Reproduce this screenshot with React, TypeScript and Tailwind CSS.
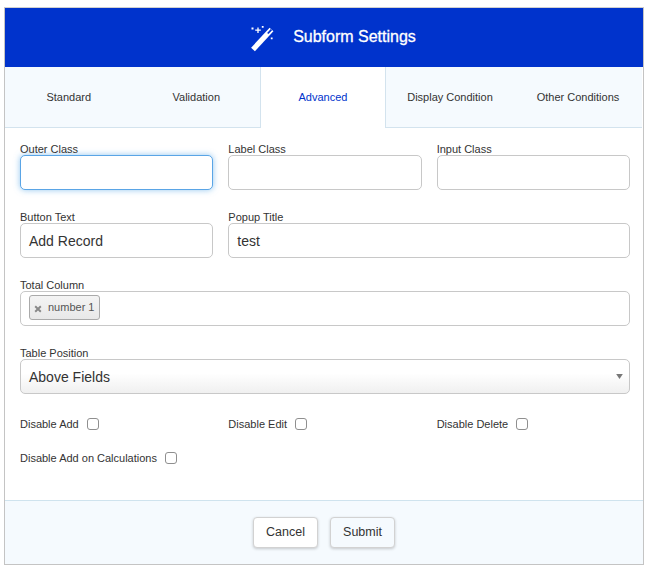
const tabs = [
  { name: 'Standard', width: 'w-[127.5px]' },
  { name: 'Validation', width: 'w-[127.5px]' },
  { name: 'Advanced', width: 'w-[126px]' },
  { name: 'Display Condition', width: 'w-[128px]' },
  { name: 'Other Conditions', width: 'w-[128px]' },
]

function WandIcon() {
  return (
    <svg viewBox="0 0 25 26" className="mt-[3px] h-[26px] w-[25px] shrink-0">
      <path d="M3 23.5L21.5 3.5" stroke="#fff" strokeWidth="5.2" />
      <path d="M17.8 7.5L21.4 3.6" stroke="#0033cc" strokeWidth="1.8" />
      <path d="M8 1.5v5.5M5.2 4.2h5.6" stroke="#fff" strokeWidth="1.3" />
      <path d="M1.5 1.5h2v2h-2zM11.8 0h1.8v1.8h-1.8zM20.8 11.5h1.8v1.8h-1.8z" fill="#fff" />
    </svg>
  )
}

function TextField({ label, value = '', focused = false, className = '' }: { label: string; value?: string; focused?: boolean; className?: string }) {
  return (
    <div className={className}>
      <label className="block text-[11px] leading-[12px] text-[#333]">{label}</label>
      <div
        className={`h-[35px] rounded-[5px] border bg-white px-2 text-[14px] leading-[35px] text-[#333] ${
          focused
            ? 'border-[#5aa5e6] shadow-[0_0_6px_rgba(102,175,233,0.7)]'
            : 'border-[#c8c8c8]'
        }`}
      >
        {value}
      </div>
    </div>
  )
}

function CheckField({ label, className = '' }: { label: string; className?: string }) {
  return (
    <div className={`flex h-[14px] items-center gap-[8px] text-[11px] text-[#333] ${className}`}>
      <span>{label}</span>
      <span className="h-[12px] w-[12px] rounded-[3px] border border-[#8f8f8f] bg-white" />
    </div>
  )
}

export default function App() {
  return (
    <div className="h-[568px] w-[647px] bg-white pl-[4px] pt-[7px] font-['Liberation_Sans',Arial,sans-serif]">
      <div className="flex h-[558px] w-[640px] flex-col border border-[#c4c4c4] border-t-[#d0d0d0]">
        {/* Header */}
        <div className="flex h-[59px] shrink-0 items-center justify-center gap-[18px] bg-[#0033cc] pl-[18px] text-white">
          <WandIcon />
          <span className="mb-[2px] text-[16px] [-webkit-text-stroke:0.3px_#fff]">Subform Settings</span>
        </div>

        {/* Tabs */}
        <div className="flex h-[61px] shrink-0">
          {tabs.map((tab) => (
            <div
              key={tab.name}
              className={
                tab.name === 'Advanced'
                  ? `flex ${tab.width} items-center justify-center border-x border-[#d3e3ee] bg-white text-[11px] text-[#0033cc]`
                  : `flex ${tab.width} items-center justify-center border-b border-[#d3e3ee] bg-[#f5fafe] text-[11px] text-[#333]`
              }
            >
              {tab.name}
            </div>
          ))}
        </div>

        {/* Form */}
        <div className="flex flex-1 flex-col pl-[15px] pr-[13px] pt-[15px]">
          <div className="grid grid-cols-3 gap-x-[15px]">
            <TextField label="Outer Class" focused />
            <TextField label="Label Class" />
            <TextField label="Input Class" />
          </div>
          <div className="mt-[21px] grid grid-cols-3 gap-x-[15px]">
            <TextField label="Button Text" value="Add Record" />
            <TextField label="Popup Title" value="test" className="col-span-2" />
          </div>
          <div className="mt-[21px]">
            <label className="block text-[11px] leading-[12px] text-[#333]">Total Column</label>
            <div className="flex h-[35px] items-center rounded-[5px] border border-[#c8c8c8] bg-white pl-[8px]">
              <div className="mb-[2px] flex h-[25px] items-center gap-[6px] rounded-[3px] border border-[#aaa] bg-gradient-to-b from-[#f4f4f4] to-[#e8e8e8] pl-[4px] pr-[5px] text-[11px] text-[#555]">
                <svg viewBox="0 0 10 10" className="mt-[2px] h-[8px] w-[8px]">
                  <path d="M1.5 1.5l7 7M8.5 1.5l-7 7" stroke="#888" strokeWidth="2.4" />
                </svg>
                <span>number 1</span>
              </div>
            </div>
          </div>
          <div className="mt-[21px]">
            <label className="block text-[11px] leading-[12px] text-[#333]">Table Position</label>
            <div className="flex h-[35px] items-center justify-between rounded-[5px] border border-[#c8c8c8] bg-gradient-to-b from-white from-40% to-[#f0f0f0] pl-2 pr-[6px] text-[14px] leading-[35px] text-[#333]">
              <span className="mt-[1px]">Above Fields</span>
              <svg viewBox="0 0 8 6" className="h-[5px] w-[7px]">
                <path d="M0 0h8L4 6z" fill="#777" />
              </svg>
            </div>
          </div>
          <div className="mt-[23px] grid grid-cols-3 gap-x-[15px]">
            <CheckField label="Disable Add" />
            <CheckField label="Disable Edit" />
            <CheckField label="Disable Delete" />
          </div>
          <CheckField label="Disable Add on Calculations" className="mt-[20px]" />
        </div>

        {/* Footer */}
        <div className="flex h-[64px] shrink-0 items-center justify-center gap-[12px] border-t border-[#cfe3ee] bg-[#f5fafe]">
          <button className="h-[31px] w-[65px] rounded-[4px] border border-[#d2d2d2] bg-white text-[12.5px] text-[#333] shadow-[0_1px_3px_rgba(0,0,0,0.2)]">
            Cancel
          </button>
          <button className="h-[31px] w-[65px] rounded-[4px] border border-[#d2d2d2] bg-[#f5fafe] text-[12.5px] text-[#333] shadow-[0_1px_3px_rgba(0,0,0,0.2)]">
            Submit
          </button>
        </div>
      </div>
    </div>
  )
}
